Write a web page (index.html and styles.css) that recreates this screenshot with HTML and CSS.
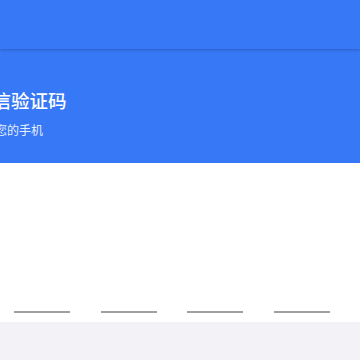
FILE: index.html
```html
<html>
<head>
<title> 短信验证码 </title>
<link rel="stylesheet" href="styles.css">
</head>
<body>
<div class="page">

  <div class="toolbar"></div>

  <div class="hero">
    <h1 class="hero-title">短信验证码</h1>
    <p class="hero-sub">验证码已发送至您的手机</p>
  </div>

  <div class="code-form">
    <div class="code-keys">
      <input type="text" class="code-box" maxlength="1" />
      <input type="text" class="code-box" maxlength="1" />
      <input type="text" class="code-box" maxlength="1" />
      <input type="text" class="code-box" maxlength="1" />
    </div>
  </div>

  <div class="footer"></div>

</div>
</body>
</html>
```

FILE: styles.css
```css
html, body {
  margin: 0;
  height: 100%;
  font-family: "Noto Sans CJK SC", "Noto Sans", sans-serif;
  background-color: #f2f2f7;
  overflow: hidden;
}

.page {
  display: flex;
  flex-direction: column;
  height: 100%;
}

.toolbar {
  height: 49px;
  background-color: #3778f6;
  box-shadow: 0 1px 3px rgba(0,0,0,.22);
  position: relative;
  z-index: 1;
}

.hero {
  height: 114px;
  box-sizing: border-box;
  padding-top: 39px;
  background-color: #3778f6;
  color: #fff;
  white-space: nowrap;
}

.hero-title {
  margin: 0 0 0 -26px;
  font-size: 18.5px;
  line-height: 24px;
  font-weight: 500;
}

.hero-sub {
  margin: 9px 0 0 -89px;
  font-size: 12px;
  line-height: 18px;
  color: rgba(255,255,255,.9);
}

.code-form {
  height: 159px;
  box-sizing: border-box;
  background-color: #fff;
  display: flex;
  align-items: flex-end;
  padding: 0 0 9px 14px;
}

.code-keys {
  display: flex;
  gap: 30.7px;
}

.code-box {
  width: 56px;
  height: 30px;
  padding: 0;
  border: none;
  border-bottom: 2px solid #a0a0a0;
  background: transparent;
  outline: none;
  text-align: center;
  font-size: 18px;
}

.footer {
  flex: 1;
  background-color: #f2f2f7;
}
```
